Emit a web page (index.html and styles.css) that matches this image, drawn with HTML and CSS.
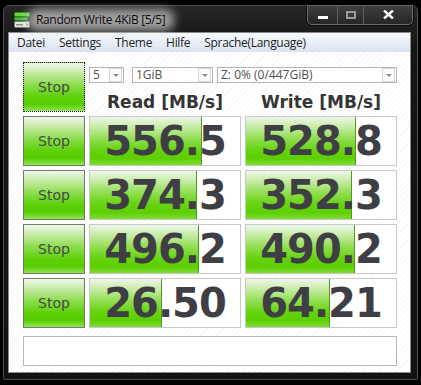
FILE: index.html
```html
<!DOCTYPE html>
<html lang="de">
<head>
  <meta charset="UTF-8" />
  <title>Random Write 4KiB [5/5]</title>
  <link rel="stylesheet" href="styles.css">
</head>
<body>
  <div class="window">
    <div class="titlebar">
      <svg class="app-icon" width="16" height="16" viewBox="0 0 16 16">
        <rect x="0.5" y="0.5" width="15" height="4" rx="1" fill="#67d63f" stroke="#2f8a22"/>
        <rect x="0.5" y="5" width="13" height="3.5" rx="1" fill="#44bb2e" stroke="#2a7a20"/>
        <rect x="0.5" y="9.5" width="15" height="6" rx="1" fill="#e6e6e6" stroke="#777"/>
        <rect x="2" y="12" width="7" height="1.5" fill="#8a8a8a"/>
        <rect x="12" y="11.5" width="2" height="2" fill="#5cc93a"/>
      </svg>
      <span class="title">Random Write 4KiB [5/5]</span>
      <div class="caption-buttons">
        <span class="cb cb-min">
          <svg width="10" height="3" viewBox="0 0 10 3"><rect width="10" height="3" fill="#fff"/></svg>
        </span>
        <span class="cb cb-max">
          <svg width="10" height="8" viewBox="0 0 10 8"><rect x="1" y="1" width="8" height="6" fill="#3a3a3a" stroke="#9a9a9a" stroke-width="2"/></svg>
        </span>
        <span class="cb cb-close">
          <svg width="11" height="9" viewBox="0 0 11 9"><path d="M1 0.5 L10 8.5 M10 0.5 L1 8.5" stroke="#fff" stroke-width="2.4"/></svg>
        </span>
      </div>
    </div>

    <div class="client">
      <div class="menubar">
        <span>Datei</span>
        <span>Settings</span>
        <span>Theme</span>
        <span>Hilfe</span>
        <span>Sprache(Language)</span>
      </div>

      <div class="content">
        <div class="grid">
          <div class="stop focused">Stop</div>
          <div class="controls">
            <div class="combos">
              <div class="combo combo-count"><span>5</span><i class="drop"></i></div>
              <div class="combo combo-size"><span>1GiB</span><i class="drop"></i></div>
              <div class="combo combo-drive"><span>Z: 0% (0/447GiB)</span><i class="drop"></i></div>
            </div>
            <div class="heads">
              <span>Read [MB/s]</span>
              <span>Write [MB/s]</span>
            </div>
          </div>

          <div class="stop">Stop</div>
          <div class="meter"><div class="fill" style="width: 112px"></div><span>556.5</span></div>
          <div class="meter"><div class="fill" style="width: 110px"></div><span>528.8</span></div>

          <div class="stop">Stop</div>
          <div class="meter"><div class="fill" style="width: 107px"></div><span>374.3</span></div>
          <div class="meter"><div class="fill" style="width: 106px"></div><span>352.3</span></div>

          <div class="stop">Stop</div>
          <div class="meter"><div class="fill" style="width: 109px"></div><span>496.2</span></div>
          <div class="meter"><div class="fill" style="width: 109px"></div><span>490.2</span></div>

          <div class="stop">Stop</div>
          <div class="meter"><div class="fill" style="width: 72px"></div><span>26.50</span></div>
          <div class="meter"><div class="fill" style="width: 84px"></div><span>64.21</span></div>
        </div>

        <div class="status"></div>
      </div>
    </div>
  </div>
</body>
</html>
```

FILE: styles.css
```css
html, body {
  margin: 0;
  padding: 0;
  background: #000;
  width: 421px;
  height: 385px;
  overflow: hidden;
  font-family: 'Open Sans', 'Noto Sans', sans-serif;
}

.window {
  margin: 5px 0 0 3px;
  width: 415px;
  height: 375px;
  box-sizing: border-box;
  border: 1px solid #4e4e4e;
  border-radius: 6px 6px 2px 2px;
  background: linear-gradient(to bottom, #262626, #151515 40px, #121212);
  padding: 0 6px 6px 4px;
  display: flex;
  flex-direction: column;
}

/* title bar */
.titlebar {
  height: 26px;
  display: flex;
  align-items: flex-start;
}

.app-icon {
  margin: 6px 0 0 6px;
  flex: none;
}

.title {
  position: relative;
  z-index: 0;
  margin: 6px 0 0 6px;
  font-size: 12px;
  letter-spacing: -0.35px;
  line-height: 16px;
  color: #0c0c0c;
  white-space: nowrap;
}

.title::before {
  content: '';
  position: absolute;
  left: -9px;
  right: -9px;
  top: -3px;
  bottom: -3px;
  background: rgba(215, 215, 215, 0.7);
  border-radius: 9px;
  filter: blur(5px);
  z-index: -1;
}

.caption-buttons {
  margin: -1px -2px 0 auto;
  display: flex;
  height: 19px;
  border: 1px solid #6a6a6a;
  border-top: none;
  border-radius: 0 0 5px 5px;
  overflow: hidden;
  box-shadow: 0 0 0 1px rgba(0, 0, 0, 0.6);
}

.cb {
  display: flex;
  align-items: center;
  justify-content: center;
  height: 19px;
  background: linear-gradient(to bottom, rgba(255, 255, 255, 0.12), rgba(255, 255, 255, 0.03));
}

.cb + .cb {
  border-left: 1px solid #5e5e5e;
}

.cb-min { width: 29px; }
.cb-min svg { margin-top: 6px; }
.cb-max { width: 25px; }
.cb-close { width: 48px; }

/* client area */
.client {
  flex: 1;
  border: 1px solid #8a8a8a;
  background: #fff;
  display: flex;
  flex-direction: column;
}

.menubar {
  height: 19px;
  display: flex;
  gap: 14px;
  padding-left: 8px;
  align-items: center;
  font-size: 12px;
  letter-spacing: -0.3px;
  color: #1e1e1e;
  background: linear-gradient(to bottom, #f8fafd, #e6ecf5 60%, #dbe3f0);
}

.content {
  flex: 1;
  padding: 10px 0 0 14px;
  background: repeating-linear-gradient(135deg, #ffffff 0 3px, #f7f7f7 3px 4px);
}

.grid {
  display: grid;
  grid-template-columns: 62px 152px 152px;
  grid-auto-rows: 50px;
  gap: 4px;
}

.stop {
  box-sizing: border-box;
  border: 1px solid #6d7c6b;
  background: linear-gradient(to bottom, #f0f7ec 0%, #c3ea9f 22%, #86dc45 48%, #5cd007 72%, #56cd00 86%, #92e457 100%);
  display: flex;
  align-items: center;
  justify-content: center;
  font-family: 'DejaVu Sans', sans-serif;
  font-size: 14px;
  color: #444c44;
}

.stop.focused {
  border: 1px dotted #1a1a1a;
}

.controls {
  grid-column: 2 / 4;
  display: flex;
  flex-direction: column;
}

.combos {
  margin-top: 5px;
  display: flex;
  gap: 4px;
}

.combo {
  box-sizing: border-box;
  height: 16px;
  border: 1px solid #b5b5b5;
  background: #fff;
  display: flex;
  align-items: center;
  padding-left: 3px;
  font-size: 12px;
  color: #505050;
}

.combo span {
  flex: 1;
  line-height: 14px;
}

.combo-count { width: 35px; margin-right: 4px; }
.combo-size { width: 81px; }
.combo-drive { width: 180px; }

.drop {
  width: 11px;
  height: 12px;
  margin-right: 1px;
  border: 1px solid #d6d6d6;
  background: #fbfbfb;
  display: flex;
  align-items: center;
  justify-content: center;
}

.drop::after {
  content: '';
  border-left: 3px solid transparent;
  border-right: 3px solid transparent;
  border-top: 3px solid #8c8c8c;
}

.heads {
  margin-top: 9px;
  display: grid;
  grid-template-columns: 152px 152px;
  gap: 4px;
  font-family: 'DejaVu Sans', sans-serif;
  font-weight: bold;
  font-size: 17px;
  line-height: 20px;
  color: #353535;
  text-align: center;
}

.meter {
  position: relative;
  box-sizing: border-box;
  border: 1px solid #c8c8c8;
  background: #fff;
  display: flex;
  align-items: center;
  justify-content: center;
}

.fill {
  position: absolute;
  left: 0;
  top: 0;
  bottom: 0;
  box-sizing: border-box;
  border-right: 1px solid #4f9a22;
  background: linear-gradient(to bottom, #eef6ea 0%, #c9eca9 20%, #92de52 45%, #68d312 68%, #5ccf00 86%, #7fdc36 100%);
}

.meter span {
  position: relative;
  font-family: 'DejaVu Sans', sans-serif;
  font-weight: bold;
  font-size: 40px;
  letter-spacing: -1px;
  line-height: 48px;
  color: #3e3e44;
}

.status {
  margin-top: 8px;
  width: 374px;
  height: 30px;
  box-sizing: border-box;
  border: 1px solid #b9b9b9;
  background: #fff;
}
```
